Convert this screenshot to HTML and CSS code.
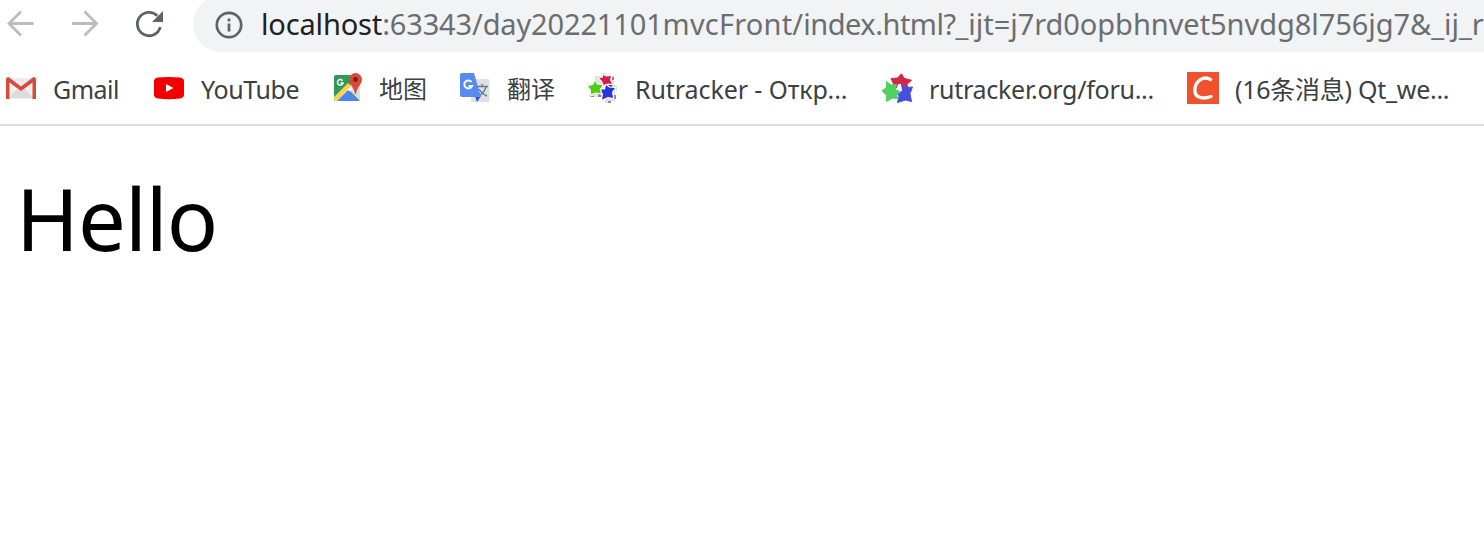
FILE: index.html
```html
<!DOCTYPE html>
<html lang="zh-CN">
<head>
<meta charset="utf-8">
<title>Hello</title>
<link rel="stylesheet" href="styles.css">
</head>
<body>
<header class="browser">
  <nav class="toolbar">
    <svg class="nav-icon muted" viewBox="0 0 32 32"><path d="M28.500 15.500H4M16 3.500 4 15.500l12 12"/></svg>
    <svg class="nav-icon muted" viewBox="0 0 32 32"><path d="M3 15.500h24.500M15.500 3.500 27.500 15.500 15.500 27.500"/></svg>
    <svg class="nav-icon" viewBox="0 0 32 32"><path class="reload-arc" d="M27.300 19.200A11.700 11.700 0 1 1 24.300 7.700"/><path class="solid" d="M30 3v11H19z"/></svg>
    <div class="address">
      <svg class="info" viewBox="0 0 28 28"><circle cx="14" cy="14" r="12.200"/><path d="M14 12.500V20.500M14 7.500v3"/></svg>
      <span class="url"><span class="host">localhost</span><span class="path">:63343/day20221101<span class="folder">mvcFront/</span><span class="file">index.html?</span><span class="query">_ijt=j7rd0opbhnvet5nvdg8l756jg7&amp;_ij_r</span></span></span>
    </div>
  </nav>
  <nav class="bookmarks">
    <a class="bookmark">
      <svg class="favicon" viewBox="0 0 32 32"><path fill="#f0f0f0" d="M2 6h28v21H2z"/><path fill="#dcdcdc" d="m3 26 10-10 3 2 3-2 10 10z"/><path fill="#ececec" d="M5 6h22L16 15z"/><path fill="#d54b3d" d="M1 7.500Q1 5 3.500 5L16 14.500 28.500 5Q31 5 31 7.500V27h-3.500V10.500L16 19 4.500 10.500V27H1z"/></svg>
      <span class="label gmail">Gmail</span>
    </a>
    <a class="bookmark">
      <svg class="favicon" viewBox="0 0 32 32"><path fill="#f00000" d="M5 5.600q11-1.200 22 0 4 .4 4 4v13q0 3.600-4 4-11 1.200-22 0-4-.4-4-4v-13q0-3.600 4-4"/><path fill="#fff" d="m13 12 7.500 4-7.500 4z"/></svg>
      <span class="label youtube">YouTube</span>
    </a>
    <a class="bookmark">
      <svg class="favicon" viewBox="0 0 32 32"><clipPath id="map"><rect x="3" y="3" width="26" height="26" rx="2"/></clipPath><g clip-path="url(#map)"><path fill="#30995a" d="M3 3h26v26H3z"/><path fill="#dedede" d="m16 16 8-8 5 4v17z"/><path fill="#fff" d="m3 29 15-15 3 3L9 29z"/><path fill="#f7d44a" d="m2 26 15-15 3 3L5 30z"/><path fill="#4f86ec" d="m5 30 12-12 12 12z"/></g><path fill="none" stroke="#fff" stroke-width="1.500" d="M11.500 8.700A2.800 2.800 0 1 0 12 11H9.500"/><path fill="#d94a3a" d="M24.500 1A6.500 6.500 0 0 1 31 7.500c0 5-5 7-6 14.500h-1c-1-7.500-6-9.500-6-14.500A6.500 6.500 0 0 1 24.500 1"/><circle cx="24.500" cy="7.500" r="2.400" fill="#76221d"/></svg>
      <span class="label cjk">地图</span>
    </a>
    <a class="bookmark">
      <svg class="favicon" viewBox="0 0 32 32"><rect x="12" y="7" width="18.500" height="23" rx="1.500" fill="#e0e0e0"/><path fill="none" stroke="#5b7f8c" stroke-width="1.400" d="M18 14.500h11M23 12v2.500M27 15q-2 6-7 9M20 17q3 5 8 7"/><path fill="#3453ba" d="m16 24 6 0-4 6z"/><path fill="#578bf0" d="M3 1h12l7 24H3q-2 0-2-2V3q0-2 2-2"/><path fill="none" stroke="#fff" stroke-width="2" d="M12.500 10A4 4 0 1 0 13 14H9.500"/></svg>
      <span class="label cjk">翻译</span>
    </a>
    <a class="bookmark">
      <svg class="favicon" viewBox="0 0 32 32"><g fill="#dedede"><path d="M15 1h4v3h8v9h3v6h-2v10h-4v2h-6v-3h-4v-5h-4v2H2v-4h2v-5H0v-4h8V4h6z"/></g><path fill="#888" d="M25 5h2v3h-2zM24 10h2v4h-3zM11 21h5v4h-5zM27 23h2v4h-2zM4 24h3v1H4zM21 29h3v2h-3z"/><path fill="#333" d="M13 18h4v3h-3zM21 13h4v2h-4z"/><g stroke="#fff" stroke-width="2.500" paint-order="stroke" stroke-linejoin="round"><path fill="#dc1846" d="m16 3 3 1.500L24 4l-1 4 2 4-4-.5-5 2-.5-4L12 6l4-.5z"/><path fill="#50cd14" d="m8 9 2 3.500 5.500.500-2 3.500.5 5-4.500-1L4 22l0-4-3-4 5-1z"/><path fill="#2934db" d="m19 13 3 2.500 6 .500-3 4 1 6-5-1-6 2.500 1-5-2-5h4z"/></g></svg>
      <span class="label rutracker">Rutracker - Откр...</span>
    </a>
    <a class="bookmark">
      <svg class="favicon" viewBox="0 0 32 32"><g stroke-linejoin="round" stroke-width="1"><path fill="#d92348" stroke="#d92348" d="m20.500 1.800 2.500 4.500 7.500 2-4.500 4 1 4-4-1-2-4-4 .5-2 4.500-5 .5 2.500-5L10 6.500l6.500-.500z"/><path fill="#51d064" stroke="#51d064" d="M5.500 9.500 10 13l5.500-.500L14 17.500l4.500 2-2.500 4 .5 3-5-.500-6 3.500v-6L1 18.500l4.500-2.500z"/><path fill="#4650df" stroke="#4650df" d="m20.500 12 4 3.500 7-.500-2.500 6.500 1.500 8-6-1.500-8 2.500 1.500-6-.500-2.500 4-3.500z"/></g></svg>
      <span class="label forum">rutracker.org/foru...</span>
    </a>
    <a class="bookmark">
      <svg class="favicon" viewBox="0 0 32 32"><path fill="#f0522d" d="M0 0h32v32H0z"/><path fill="none" stroke="#fff" stroke-width="3.400" stroke-linecap="round" d="M23.500 7.500C16.500 3.500 8 9 7.800 18c-.1 8 8.200 9.500 16.200 6.500"/></svg>
      <span class="label messages">(16条消息) Qt_we...</span>
    </a>
  </nav>
</header>
<main class="page">Hello</main>
</body>
</html>
```
FILE: styles.css
```css
* { box-sizing: border-box; }
body {
  margin: 0;
  height: 538px;
  overflow: hidden;
  background: #fff;
  color: #000;
  font-family: "Noto Sans", "Noto Sans CJK SC", sans-serif;
}
.browser { height: 126px; border-bottom: 2px solid #dcdcdc; }
.toolbar { display: flex; align-items: flex-start; height: 52px; padding-left: 5px; }
.nav-icon {
  flex: none;
  width: 32px;
  height: 32px;
  margin: 8px 32px 0 0;
  fill: none;
  stroke: #5f6368;
  stroke-width: 2.8;
}
.muted { stroke: #babcbe; }
.nav-icon .solid { fill: #5f6368; stroke: none; }
.address {
  flex: 1;
  display: flex;
  align-items: center;
  height: 56px;
  margin: -4px 0 0 -4px;
  padding: 0 0 0 22px;
  overflow: hidden;
  border-radius: 28px 0 0 28px;
  background: #f1f3f4;
}
.info {
  flex: none;
  width: 28px;
  height: 28px;
  margin: 1px 18px 0 0;
  fill: none;
  stroke: #5f6368;
  stroke-width: 2.7;
}
.url { flex: none; font-size: 29px; line-height: 40px; white-space: nowrap; letter-spacing: -0.15px; }
.host { color: #202124; }
.path { color: #6b6e71; }
.folder { letter-spacing: 0.2px; }
.file { letter-spacing: -0.5px; }
.query { letter-spacing: -0.05px; }
.bookmarks {
  display: grid;
  grid-template-columns: 148px 178px 128px 128px 294px 306px 297px;
  height: 72px;
  padding-left: 5px;
  align-items: center;
}
.bookmark { display: flex; align-items: center; gap: 16px; color: #3c4043; }
.favicon { flex: none; width: 32px; height: 32px; }
.label { padding-top: 2px; font-size: 25px; line-height: 34px; white-space: nowrap; }
.cjk { font-size: 24px; }
.gmail { letter-spacing: -0.5px; }
.youtube { letter-spacing: -0.4px; }
.rutracker { letter-spacing: -0.08px; }
.forum { letter-spacing: -0.27px; }
.messages { letter-spacing: -0.27px; }
.page { padding: 32px 0 0 16px; font-size: 85px; line-height: 120px; letter-spacing: -1px; }
```
